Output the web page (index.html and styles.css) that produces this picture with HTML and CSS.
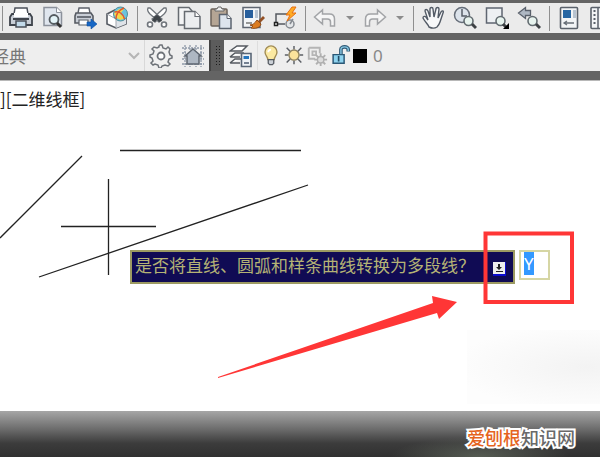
FILE: index.html
```
<!DOCTYPE html>
<html lang="zh-CN">
<head>
    <meta charset="UTF-8">
    <meta name="viewport" content="width=device-width, initial-scale=1.0">
    <title>二维线框</title>
    <link rel="stylesheet" href="styles.css">
</head>
<body>
    <header class="toolbars">
        <div class="toolbar">
            <span class="separator edge"></span>
            <button class="tool" aria-label="打印">
                <svg viewBox="0 0 24 24">
                    <path d="M5 8 6 2h12l1 6" fill="#fff" stroke="#4b5059" stroke-width="1.5"/>
                    <path d="M3 8h18l2 3v8H1v-8z" fill="#c9ced6" stroke="#3f444c" stroke-width="1.8"/>
                    <path d="M4 13h16" stroke="#3f444c" stroke-width="2"/>
                    <path d="M5 7h14v4H5z" fill="#fff"/>
                    <path d="M7 15h10v6H7z" fill="#c3daea" stroke="#4b5059" stroke-width="1.5"/>
                </svg>
            </button>
            <button class="tool" aria-label="打印预览">
                <svg viewBox="0 0 24 24">
                    <path d="M3 1.5h12.500l5 5v13H3z" fill="#e0e6ee" stroke="#8b919b" stroke-width="1.5"/>
                    <path d="M15.500 1.500v5h5" fill="#fff" stroke="#8b919b"/>
                    <circle cx="13" cy="13.500" r="4.500" fill="#e4f4f8" stroke="#555c61" stroke-width="1.8"/>
                    <path d="m16 17 4 4" stroke="#333" stroke-width="3"/>
                </svg>
            </button>
            <button class="tool" aria-label="发布">
                <svg viewBox="0 0 24 24">
                    <path d="M5 7 6 2h10l1 5" fill="#fff" stroke="#5d626b" stroke-width="1.4"/>
                    <path d="M3 7h15l2 3v7H2v-7z" fill="#c9ced6" stroke="#555a62" stroke-width="1.6"/>
                    <path d="M4 11h14" stroke="#555a62" stroke-width="1.6"/>
                    <path d="M6 14h9v5H6z" fill="#fff" stroke="#5d626b" stroke-width="1.2"/>
                    <path d="M14 16h4v-3l6 5-6 5v-3h-4z" fill="#1767c5" stroke="#0d4f9e" stroke-width=".6"/>
                </svg>
            </button>
            <button class="tool" aria-label="三维打印">
                <svg viewBox="0 0 24 24">
                    <path d="M2 8 10 4l11 5v9l-10 4-9-4z" fill="#fff" stroke="#565b63" stroke-width="1.6"/>
                    <path d="m11 13 10-4v9l-10 4z" fill="#dfe3e8"/>
                    <path d="m2 8 9 5v9" fill="none" stroke="#a1a6ad"/>
                    <circle cx="15.500" cy="8" r="7" fill="#6cc3dd" stroke="#4f8f9b"/>
                    <path d="M9 8c3-5 6-6 10-5l-4 5 5 4c-4 3-8 2-11-4z" fill="#f3d84a"/>
                    <path d="M11 13c0-6 3-9 8-11M9.500 6c5-1 9 2 10 7" fill="none" stroke="#e4572d" stroke-width="1.500"/>
                </svg>
            </button>
            <span class="separator"></span>
            <button class="tool" aria-label="剪切">
                <svg viewBox="0 0 24 24">
                    <path d="M3 2c-1 2 0 4 2 6l9 8 3-3L5 2zM21 2c1 2 0 4-2 6l-9 8-3-3L19 2z" fill="#fff" stroke="#70757b" stroke-width="1.300"/>
                    <path d="m9 11 3-2 3 2 2 4-3 1-2-2-2 2-3-1z" fill="#3f4449"/>
                    <circle cx="5" cy="18.500" r="2.500" fill="#fff" stroke="#70757b" stroke-width="1.600"/>
                    <circle cx="19" cy="18.500" r="2.500" fill="#fff" stroke="#70757b" stroke-width="1.600"/>
                </svg>
            </button>
            <button class="tool" aria-label="复制">
                <svg viewBox="0 0 24 24">
                    <path d="M1.500 1.500H12L15 5v14H1.500z" fill="#f4f5f6" stroke="#666b71" stroke-width="1.500"/>
                    <path d="M7.500 5.500H18l5 5v12H7.500z" fill="#eceef0" stroke="#666b71" stroke-width="1.500"/>
                    <path d="M18 5.500v5h5" fill="#fff" stroke="#666b71" stroke-width="1.200"/>
                </svg>
            </button>
            <button class="tool" aria-label="粘贴">
                <svg viewBox="0 0 24 24">
                    <rect x="2" y="3" width="16" height="17" rx="1" fill="#b5a594" stroke="#6b6259" stroke-width="1.500"/>
                    <path d="M6 5V3h2l1-2h3l1 2h2v2z" fill="#eee" stroke="#686868"/>
                    <path d="M10.500 8.500H18l4 4v10H10.500z" fill="#dde4ed" stroke="#5c6470" stroke-width="1.500"/>
                    <path d="M18 8.500v4h4" fill="#fff" stroke="#5c6470"/>
                </svg>
            </button>
            <button class="tool" aria-label="特性匹配">
                <svg viewBox="0 0 24 24">
                    <path d="M2 1.500h17v20H2z" fill="#f3f5f7" stroke="#5f6671" stroke-width="1.500"/>
                    <path d="M4 4h8v8H4z" fill="#285f9d"/>
                    <path d="M14 4h3v8h-3z" fill="#b9c5d3"/>
                    <path d="M5 17h6" stroke="#777" stroke-width="1.500"/>
                    <path d="m22 10 2 2-5 5-2-2z" fill="#935125"/>
                    <path d="m16 14 4 4c-1 4-6 5-10 4l2-2-3-1c3 0 5-2 7-5z" fill="#dc7c20" stroke="#8f4c18"/>
                </svg>
            </button>
            <button class="tool" aria-label="块编辑器">
                <svg viewBox="0 0 24 24">
                    <path d="M3 18V8h13M3 18h9" fill="none" stroke="#555a60" stroke-width="1.500"/>
                    <path d="M1.500 16.500h3v3h-3z" fill="#fff" stroke="#222" stroke-width="1.500"/>
                    <circle cx="17" cy="18" r="4" fill="#e4e6e8" stroke="#858a90" stroke-width="1.500"/>
                    <path d="m17 18 3-5" stroke="#858a90" stroke-width="1.500"/>
                    <path d="m19 1-6 8h4l-3 6 9-8h-4l4-6z" fill="#ffab24" stroke="#e66f12"/>
                </svg>
            </button>
            <span class="separator"></span>
            <button class="tool" aria-label="放弃">
                <svg viewBox="0 0 24 24">
                    <path d="m1.500 11 8-7v4h7c4 0 5 2 5 5v7h-4v-4c0-2-1-3-3-3h-5v5z" fill="#f6f6f6" stroke="#a2a4a7" stroke-width="1.500"/>
                </svg>
            </button>
            <button class="caret" aria-label="放弃列表"></button>
            <button class="tool" aria-label="重做">
                <svg viewBox="0 0 24 24">
                    <path d="m22.500 11-8-7v4h-7c-4 0-5 2-5 5v7h4v-4c0-2 1-3 3-3h5v5z" fill="#f6f6f6" stroke="#a2a4a7" stroke-width="1.500"/>
                </svg>
            </button>
            <button class="caret" aria-label="重做列表"></button>
            <span class="separator"></span>
            <button class="tool" aria-label="平移">
                <svg viewBox="0 0 24 24">
                    <path d="M8 21c-1-3-4-5-6-9 0-2 2-2 3-1l2 3L4 5c0-2 2-2 3 0l2 6V3c0-2 3-2 3 0l1 8 2-8c0-2 3-2 3 0l-1 9 3-6c1-2 3-1 2 1l-3 9c-1 3-2 4-3 5-3 2-6 1-8 0z" fill="#f7f8f9" stroke="#535b66" stroke-width="1.400"/>
                </svg>
            </button>
            <button class="tool" aria-label="实时缩放">
                <svg viewBox="0 0 24 24">
                    <circle cx="9" cy="9" r="7.500" fill="#dce3eb" stroke="#666e79" stroke-width="1.500"/>
                    <path d="M9 3v7h5" fill="none" stroke="#555d68" stroke-width="1.500"/>
                    <circle cx="15.500" cy="15" r="4.500" fill="#e7f3ee" stroke="#626b70" stroke-width="1.600"/>
                    <path d="m19 18 4 4" stroke="#3d4144" stroke-width="3"/>
                </svg>
            </button>
            <button class="tool" aria-label="窗口缩放">
                <svg viewBox="0 0 24 24">
                    <path d="M1.500 2h15.500v15H1.500z" fill="#edf0f3" stroke="#5f6671" stroke-width="1.500"/>
                    <circle cx="15.500" cy="15" r="4.500" fill="#e7f3ee" stroke="#626b70" stroke-width="1.600"/>
                    <path d="m18 18 3 3" stroke="#3d4144" stroke-width="3"/>
                    <path d="M24 17v6h-6z" fill="#000"/>
                </svg>
            </button>
            <button class="tool" aria-label="缩放上一个">
                <svg viewBox="0 0 24 24">
                    <path d="m1.500 7 7-5.500v3h5v5h-5v3z" fill="#aeb7c3" stroke="#59606b" stroke-width="1.300"/>
                    <circle cx="15.500" cy="15" r="4.500" fill="#e7f3ee" stroke="#626b70" stroke-width="1.600"/>
                    <path d="m19 18 4 4" stroke="#3d4144" stroke-width="3"/>
                </svg>
            </button>
            <span class="separator"></span>
            <button class="tool" aria-label="特性">
                <svg viewBox="0 0 24 24">
                    <rect x="3.500" y="1.500" width="17" height="21" rx="1" fill="#f2f4f6" stroke="#5a616b" stroke-width="1.600"/>
                    <path d="M6 4h8v8H6z" fill="#2565a3"/>
                    <path d="M16 4h3v8h-3z" fill="#b7c3d0"/>
                    <path d="M7 17h10M10 15l-3 2 3 2" fill="none" stroke="#676e77" stroke-width="1.300"/>
                </svg>
            </button>
            <button class="tool" aria-label="设计中心">
                <svg viewBox="0 0 24 24">
                    <rect x="2" y="1.500" width="21" height="21" rx="1" fill="#f2f4f6" stroke="#5a616b" stroke-width="1.600"/>
                    <path d="M9 2v20" stroke="#5a616b" stroke-width="1.500"/>
                    <path d="M5.500 4v16" stroke="#5a616b" stroke-width="2" stroke-dasharray="2 2"/>
                    <path d="M11 4h9v6h-9z" fill="#a9b1bc"/>
                </svg>
            </button>
        </div>

        <div class="toolbar layers">
            <select class="workspace" aria-label="工作空间">
                <option>经典</option>
            </select>
            <button class="tool" aria-label="工作空间设置">
                <svg viewBox="0 0 24 24">
                    <path d="m10 2 1-1h2l1 3 3 1 2-2 2 2-1 3 1 3 2 1v2l-3 1-1 3 2 2-2 2-3-1-3 1-1 2h-2l-1-3-3-1-2 1-2-2 2-2-1-3-2-1v-2l3-1 1-3-2-2 2-2 3 1 2-1z" fill="#f1f1f1" stroke="#6d7278" stroke-width="1.500"/>
                    <circle cx="12" cy="12" r="3.500" fill="#fff" stroke="#6d7278" stroke-width="1.800"/>
                </svg>
            </button>
            <button class="tool" aria-label="我的工作空间">
                <svg viewBox="0 0 24 24">
                    <path d="M1 4h22M1 20h22M4 1v22M20 1v22M9 1v5M15 1v5M9 19v4M15 19v4M1 9h4M1 15h4M19 9h4M19 15h4" stroke="#8e99a8" stroke-width="1.300" stroke-dasharray="2 1"/>
                    <path d="m4 12 8-7 8 7h-2v8H6v-8z" fill="#aeb7c2" stroke="#5e6670" stroke-width="1.500"/>
                </svg>
            </button>
            <span class="grip"></span>
            <button class="tool" aria-label="图层特性管理器">
                <svg viewBox="0 0 24 24">
                    <path d="M1 7 8 2h10l-5 5zM1 13l5-4h9M1 19l5-4h6M1 13h10M1 19h10" fill="#fff" stroke="#555a60" stroke-width="1.500"/>
                    <path d="M12.500 9.500h9.500v13h-9.500z" fill="#eff3f7" stroke="#596676" stroke-width="1.600"/>
                    <path d="M14.500 12h5.500v3h-5.500z" fill="#2475be"/>
                    <path d="M15 19h5" stroke="#4b5b70" stroke-width="1.500"/>
                </svg>
            </button>
            <div class="layer">
                <button class="tool small" aria-label="开关图层">
                    <svg viewBox="0 0 24 24">
                        <path d="M8.500 16c0-4-3-4-3-8.500a6.500 6.500 0 0 1 13 0c0 4.500-3 4.500-3 8.500z" fill="#fbe9a2" stroke="#a18c55" stroke-width="1.500"/>
                        <path d="M9 16h6v4l-1.500 1.500h-3L9 20z" fill="#cbd0d6" stroke="#555b62" stroke-width="1.400"/>
                        <path d="M9 8c0-2 1-3 3-3" stroke="#fff" stroke-width="2" fill="none"/>
                    </svg>
                </button>
                <button class="tool small" aria-label="冻结图层">
                    <svg viewBox="0 0 24 24">
                        <path d="M12 1v4M12 17v4M2 11h4M18 11h4M4 3l4 4M16 15l4 4M4 19l4-4M16 7l4-4" stroke="#5c6066" stroke-width="1.600"/>
                        <circle cx="12" cy="11" r="5.500" fill="#fbe39b" stroke="#8f8360" stroke-width="1.500"/>
                    </svg>
                </button>
                <button class="tool small" aria-label="视口冻结">
                    <svg viewBox="0 0 24 24">
                        <path d="M3 3h12v6M3 3v12h7M7 7h4v4H7z" fill="none" stroke="#b5b5b5" stroke-width="2"/>
                        <path d="M16 9v14M9 16h14M11 11l10 10M21 11 11 21" stroke="#b0b0b0" stroke-width="2"/>
                        <circle cx="16" cy="16" r="3.500" fill="#ddd" stroke="#b0b0b0" stroke-width="1.500"/>
                    </svg>
                </button>
                <button class="tool small" aria-label="锁定图层">
                    <svg viewBox="0 0 24 24">
                        <path d="M13 10V5c0-4 8-4 8 0v2" fill="none" stroke="#315c78" stroke-width="4"/>
                        <path d="M13 10V5c0-4 8-4 8 0v1.500" fill="none" stroke="#85c6e2" stroke-width="1.500"/>
                        <path d="M4.500 10.500h12v9.500h-12z" fill="#8ed3ef" stroke="#2b5876" stroke-width="1.600"/>
                        <path d="M10.500 12v6" stroke="#234c67" stroke-width="1.800"/>
                    </svg>
                </button>
                <span class="swatch"></span>
                <span class="layer-name">0</span>
            </div>
        </div>
    </header>

    <main class="canvas">
        <p class="view-label">][二维线框]</p>

        <svg class="drawing">
            <g stroke="#222" stroke-width="1.300">
                <path d="M0 157 82 75M39 196 308 104"/>
                <path d="M120 69.500h181"/>
                <path d="M108.500 98v96M61 145.500h95"/>
            </g>
        </svg>

        <form class="prompt">
            <label class="question" for="answer">
                <span>是否将直线、圆弧和样条曲线转换为多段线？</span>
                <svg class="more" viewBox="0 0 13 14">
                    <path d="M0 0h13v14H0z" fill="#0b0bd0"/>
                    <path d="M0 0h12v12H0z" fill="#eee"/>
                    <path d="m6 8-3-3h2V2h2v3h2zM3 9h7v1H3z" fill="#222"/>
                </svg>
            </label>
            <input class="answer" id="answer" type="text" value="Y">
        </form>

        <svg class="callout">
            <path d="M485.500 152.500h86.500v68.500h-86.500z" fill="none" stroke="#ff3636" stroke-width="4"/>
            <path d="m218 296 215-74-1-7 25 6-18 17-2-6L218 297z" fill="#ff3636"/>
        </svg>
        <div class="haze"></div>
    </main>

    <footer class="footer">
        <strong class="brand">爱刨根<span>知识网</span></strong>
    </footer>

    <script>
        document.getElementById('answer').select();
    </script>
</body>
</html>
```
FILE: styles.css
```
* {
    box-sizing: border-box;
}
body {
    margin: 0;
    min-height: 100vh;
    display: flex;
    flex-direction: column;
    overflow-x: hidden;
    background-color: #fff;
    font-family: "Noto Sans CJK SC", sans-serif;
    font-size: 17px;
}
button {
    padding: 0;
    border: none;
    background: none;
}
.toolbars {
    display: flex;
    flex-direction: column;
    gap: 7px;
    padding: 3px 0 9px;
    background-color: #646464;
    border-bottom: 1px solid #b8b8b8;
}
.toolbar {
    display: flex;
    align-items: center;
    height: 30px;
    overflow: hidden;
    background-color: #ebebeb;
}
.layers {
    height: 31px;
    background-color: #eee;
}
.tool {
    display: flex;
    flex: none;
    align-items: center;
    justify-content: center;
    width: 32px;
    height: 28px;
}
.tool svg {
    width: 24px;
    height: 24px;
}
.small {
    width: 23px;
}
.small svg {
    width: 22px;
    height: 22px;
}
.separator {
    display: flex;
    flex: none;
    justify-content: center;
    width: 8px;
}
.separator::before {
    content: "";
    width: 1px;
    height: 25px;
    background-color: #8f8f8f;
}
.edge {
    width: 5px;
}
.caret {
    flex: none;
    width: 18px;
    height: 28px;
}
.caret::before {
    content: "";
    display: block;
    margin: 0 auto;
    width: 0;
    border: 4px solid transparent;
    border-top-color: #8c8c8c;
    border-bottom: none;
}
.workspace {
    appearance: none;
    flex: none;
    width: 145px;
    height: 31px;
    padding: 0;
    border: none;
    border-right: 1px solid #d8d8d8;
    border-radius: 0;
    background: url("data:image/svg+xml,%3Csvg xmlns='http://www.w3.org/2000/svg' width='12' height='8'%3E%3Cpath d='m1 1 5 5 5-5' fill='none' stroke='%23b5b5b5' stroke-width='2'/%3E%3C/svg%3E") no-repeat right 4px center;
    color: #777;
    font: inherit;
    text-indent: -8px;
}
.grip {
    display: flex;
    flex: none;
    align-items: center;
    justify-content: center;
    width: 15px;
    height: 31px;
    margin-right: 1px;
    border-left: 2px solid #444;
    background-color: #5c5c5c;
}
.grip::before {
    content: "";
    width: 6px;
    height: 21px;
    background: radial-gradient(circle, #1c1c1c 1px, transparent 1px) 0 0 / 3px 3px;
}
.layer {
    display: flex;
    align-items: center;
    height: 29px;
    padding-left: 1px;
    border-left: 1px solid #ddd;
}
.swatch {
    width: 14px;
    height: 14px;
    margin-left: 2px;
    background-color: #000;
}
.layer-name {
    margin-left: 6px;
    color: #888;
    font-family: "Noto Sans", sans-serif;
}
.canvas {
    position: relative;
    flex: 1;
    min-height: 320px;
}
.view-label {
    margin: 0;
    padding-top: 6px;
    line-height: 24px;
    color: #222;
}
.drawing,
.callout {
    position: absolute;
    top: 0;
    left: 0;
    width: 100%;
    height: 100%;
    pointer-events: none;
}
/* the dynamic input follows the crosshair */
.prompt {
    position: absolute;
    top: 169px;
    left: 130px;
    display: flex;
    align-items: flex-start;
    gap: 4px;
}
.question {
    display: flex;
    align-items: flex-start;
    justify-content: space-between;
    width: 385px;
    height: 34px;
    padding: 2px 7px 0 3px;
    border: 2px solid #9c9a62;
    background-color: #100b54;
    color: #b5b375;
    line-height: 22px;
    white-space: nowrap;
}
.more {
    width: 13px;
    height: 14px;
    margin-top: 8px;
}
.answer {
    width: 31px;
    height: 30px;
    padding: 0 3px 3px;
    border: 2px solid #d6d6a4;
    outline: none;
    background-color: #fff;
    font-family: "Noto Sans", sans-serif;
    font-size: 17px;
}
.answer::selection {
    background-color: #3399ff;
    color: #fff;
}
.haze {
    position: absolute;
    right: 0;
    bottom: 7px;
    width: 133px;
    height: 74px;
    background: radial-gradient(ellipse at 90% 50%, #f3f3f3, #fdfdfd 80%);
}
.footer {
    display: flex;
    justify-content: flex-end;
    height: 46px;
    padding: 14px 25px 0 0;
    background:
        radial-gradient(ellipse 90px 20px at 80% 100%, rgba(110, 120, 105, 0.6), transparent),
        linear-gradient(#a6a6a6, #6b6b6b 40%, #3c3c3c 70%, #303030);
}
.brand {
    color: #e5641e;
    font-size: 18px;
    font-weight: 500;
    line-height: 24px;
    -webkit-text-stroke: 4px #fff;
    paint-order: stroke fill;
}
.brand span {
    color: #6a6a6a;
}
```
